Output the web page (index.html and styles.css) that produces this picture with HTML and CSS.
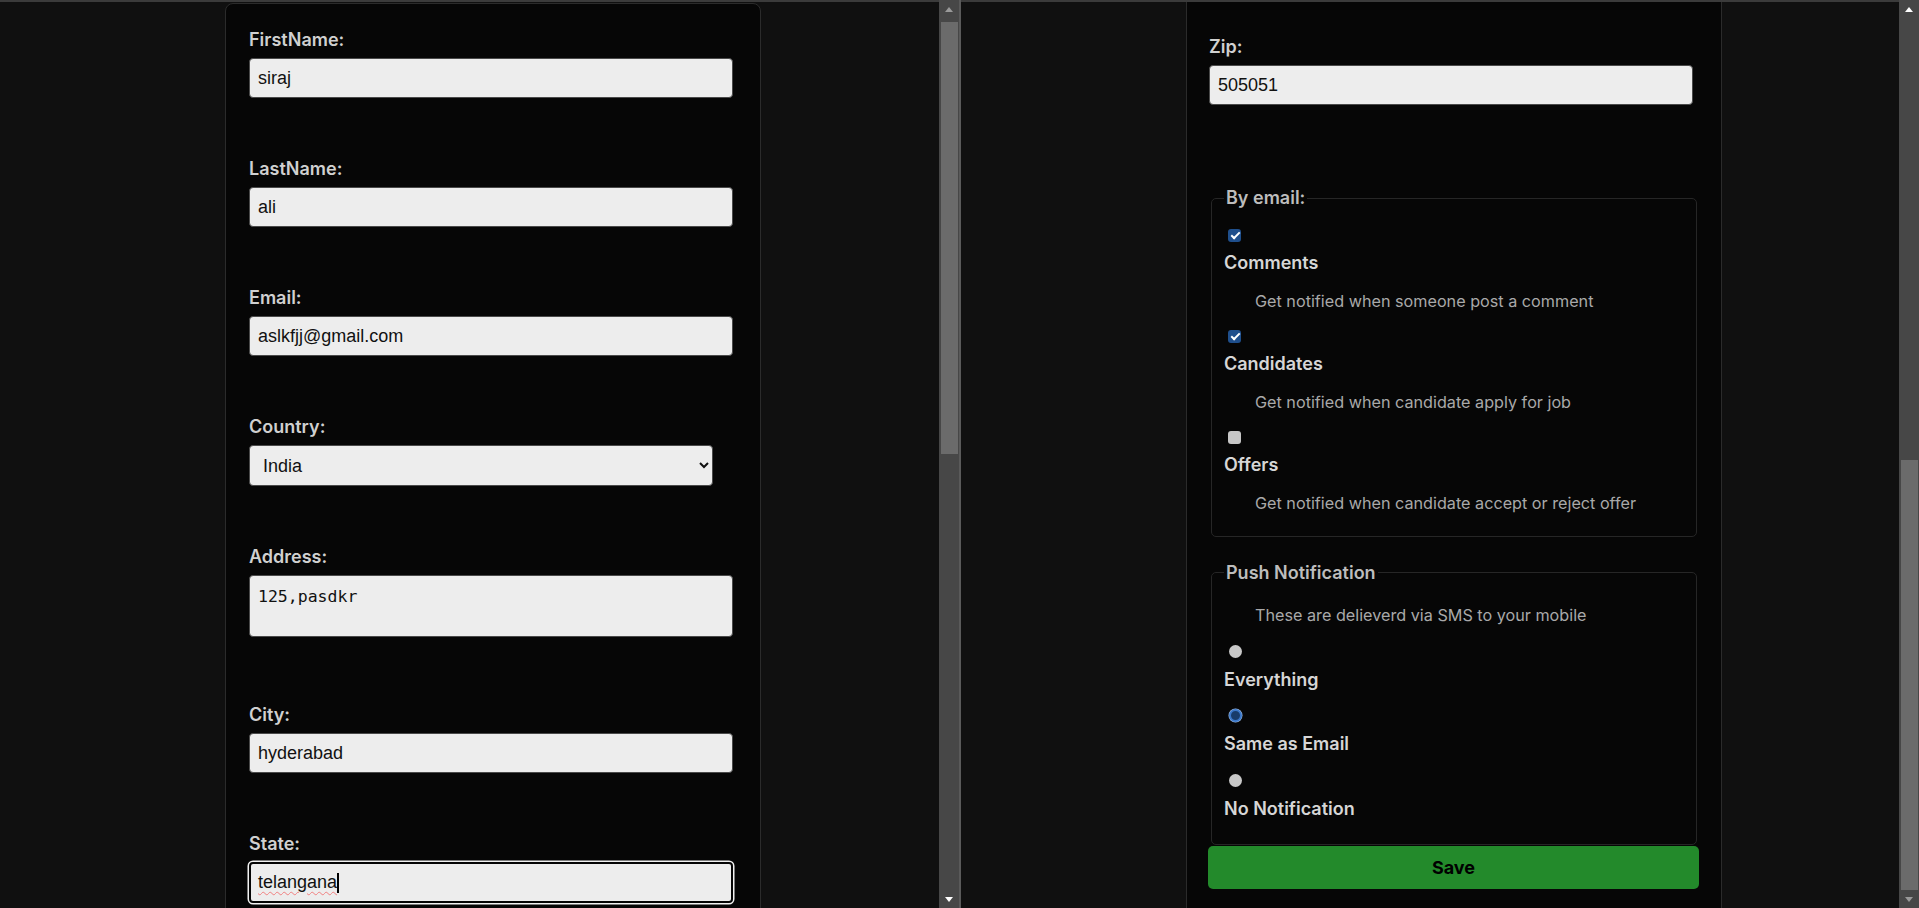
FILE: index.html
```html
<!DOCTYPE html>
<html lang="en">
<head>
<meta charset="utf-8">
<title>Profile form</title>
<link rel="stylesheet" href="styles.css">
</head>
<body>
<div class="split">
  <section class="pane pane-left">
    <div class="viewport">
      <form class="card card-head">
        <div class="field">
          <label class="field-label" for="fn">FirstName:</label>
          <input class="text-input" id="fn" type="text" value="siraj">
        </div>
        <div class="field">
          <label class="field-label" for="ln">LastName:</label>
          <input class="text-input" id="ln" type="text" value="ali">
        </div>
        <div class="field">
          <label class="field-label" for="em">Email:</label>
          <input class="text-input" id="em" type="text" value="aslkfjj@gmail.com">
        </div>
        <div class="field">
          <label class="field-label" for="co">Country:</label>
          <select class="select-input" id="co">
            <option>India</option>
            <option>USA</option>
          </select>
        </div>
        <div class="field field-area">
          <label class="field-label" for="ad">Address:</label>
          <textarea class="area-input" id="ad">125,pasdkr</textarea>
        </div>
        <div class="field">
          <label class="field-label" for="ci">City:</label>
          <input class="text-input" id="ci" type="text" value="hyderabad">
        </div>
        <div class="field">
          <label class="field-label">State:</label>
          <div class="text-input is-focused"><span class="misspelt">telangana</span><span class="caret"></span></div>
        </div>
      </form>
    </div>
    <div class="scrollbar">
      <div class="sb-btn"><span class="tri-up dim"></span></div>
      <div class="track"><div class="thumb thumb-start"></div></div>
      <div class="sb-btn"><span class="tri-down"></span></div>
    </div>
  </section>
  <div class="divider"></div>
  <section class="pane pane-right">
    <div class="viewport">
      <form class="card card-tail">
        <div class="field field-zip">
          <label class="field-label" for="zip">Zip:</label>
          <input class="text-input" id="zip" type="text" value="505051">
        </div>
        <fieldset class="group group-email">
          <legend>By email:</legend>
          <div class="opt">
            <input class="opt-box" type="checkbox" id="c1" checked>
            <label class="opt-title" for="c1">Comments</label>
            <p class="opt-desc">Get notified when someone post a comment</p>
          </div>
          <div class="opt">
            <input class="opt-box" type="checkbox" id="c2" checked>
            <label class="opt-title" for="c2">Candidates</label>
            <p class="opt-desc">Get notified when candidate apply for job</p>
          </div>
          <div class="opt">
            <input class="opt-box" type="checkbox" id="c3">
            <label class="opt-title" for="c3">Offers</label>
            <p class="opt-desc">Get notified when candidate accept or reject offer</p>
          </div>
        </fieldset>
        <fieldset class="group group-push">
          <legend>Push Notification</legend>
          <p class="opt-desc opt-desc-lead">These are delieverd via SMS to your mobile</p>
          <div class="ropt">
            <input class="opt-radio" type="radio" name="push" id="r1">
            <label class="opt-title" for="r1">Everything</label>
          </div>
          <div class="ropt">
            <input class="opt-radio" type="radio" name="push" id="r2" checked>
            <label class="opt-title" for="r2">Same as Email</label>
          </div>
          <div class="ropt">
            <input class="opt-radio" type="radio" name="push" id="r3">
            <label class="opt-title" for="r3">No Notification</label>
          </div>
        </fieldset>
        <button class="save-btn" type="button">Save</button>
      </form>
    </div>
    <div class="scrollbar">
      <div class="sb-btn"><span class="tri-up"></span></div>
      <div class="track"><div class="thumb thumb-end"></div></div>
      <div class="sb-btn"><span class="tri-down dim"></span></div>
    </div>
  </section>
</div>
</body>
</html>
```

FILE: styles.css
```css
* { box-sizing: border-box; }
html, body { margin: 0; height: 100%; }
body {
  background: #111111;
  font-family: Inter, "Noto Sans", sans-serif;
  overflow: hidden;
}
.split { display: flex; height: 908px; }
.pane { display: flex; height: 100%; }
.pane-left { width: 959px; }
.pane-right { width: 958px; }
.divider { width: 2px; background: #5a5a5a; }
.viewport {
  flex: 1;
  overflow: hidden;
  border-top: 2px solid #3b3b3b;
  background: #101010;
}

/* fake scrollbars */
.scrollbar {
  width: 20px;
  background: #474747;
  display: flex;
  flex-direction: column;
}
.sb-btn { height: 18px; display: flex; align-items: center; justify-content: center; }
.tri-up, .tri-down {
  width: 0; height: 0;
  border-left: 4.5px solid transparent;
  border-right: 4.5px solid transparent;
}
.tri-up { border-bottom: 5px solid #ffffff; }
.tri-down { border-top: 5px solid #ffffff; }
.tri-up.dim { border-bottom-color: #9a9a9a; }
.tri-down.dim { border-top-color: #9a9a9a; }
.track { flex: 1; display: flex; flex-direction: column; padding: 0 1px 0 2px; }
.thumb { background: #6b6b6b; }
.thumb-start { margin-top: 4px; height: 432px; }
.thumb-end { margin-top: auto; height: 430px; }

/* card */
.card {
  width: 536px;
  margin-left: 225px;
  background: #060606;
  border: 1px solid #2b2b2b;
  padding: 0 21px 40px 23px;
}
.card-head { margin-top: 1px; border-radius: 8px 8px 0 0; padding-top: 25px; }
.card-tail { border-top: none; border-radius: 0 0 8px 8px; padding-top: 34px; padding-left: 22px; }

.field { margin-bottom: 60px; }
.field-area { margin-bottom: 67px; }
.field-zip { margin-bottom: 0; }
.field-label {
  display: block;
  font-weight: 600;
  font-size: 18px;
  line-height: 22px;
  color: #d0d0d0;
  margin-bottom: 7px;
}
.text-input, .select-input, .area-input {
  display: block;
  border: 1px solid #4a4a4a;
  border-radius: 4px;
  background: #ededed;
  color: #111111;
  font-family: "Liberation Sans", Arial, sans-serif;
  font-size: 18px;
  outline: none;
}
.text-input { width: 484px; height: 40px; padding: 0 8px; }
.select-input { width: 464px; height: 41px; padding: 0 9px; }
.area-input {
  width: 484px;
  height: 62px;
  padding: 10px 8px;
  font-family: "DejaVu Sans Mono", "Liberation Mono", monospace;
  font-size: 16.5px;
  line-height: 22px;
  resize: none;
}
.text-input.is-focused {
  display: flex;
  align-items: center;
  height: 41px;
  border: 2px solid #050505;
  box-shadow: 0 0 0 1.5px #f2f2f2;
  padding: 0 7px;
}
.misspelt {
  text-decoration: underline wavy #f08080;
  text-decoration-thickness: 1px;
  text-underline-offset: 3px;
}
.caret { display: inline-block; width: 2px; height: 20px; background: #000; }

/* fieldsets */
.group {
  margin: 0 0 0 2px;
  width: 486px;
  border: 1px solid #262626;
  border-radius: 5px;
  padding: 0 12px;
}
.group legend {
  padding: 0 2px;
  font-weight: 600;
  font-size: 18px;
  line-height: 22px;
  color: #bdbdbd;
}
.group-email { margin-top: 82px; padding-top: 19.5px; padding-bottom: 23px; }
.group-push { margin-top: 25px; padding-top: 21px; padding-bottom: 24px; }

.opt + .opt { margin-top: 19px; }
.opt-box {
  appearance: none;
  -webkit-appearance: none;
  position: relative;
  display: block;
  width: 13px;
  height: 13px;
  margin: 0 0 0 4px;
  border-radius: 3px;
  background: #c6c6c6;
}
.opt-box:checked { background: #1f4f8c; }
.opt-box:checked::after {
  content: "";
  position: absolute;
  left: 4.5px;
  top: 1.5px;
  width: 3px;
  height: 7px;
  border: solid #ffffff;
  border-width: 0 2px 2px 0;
  transform: rotate(45deg);
}
.opt-title {
  display: block;
  margin-top: 10px;
  font-weight: 600;
  font-size: 18px;
  line-height: 22px;
  color: #d6d6d6;
}
.opt-desc {
  margin: 17px 0 0 31px;
  font-size: 16.2px;
  line-height: 20px;
  color: #a9a9a9;
}
.opt-desc-lead { margin-top: 0; }

.ropt { margin-top: 18.5px; }
.ropt:first-of-type { margin-top: 20px; }
.ropt .opt-title { margin-top: 11px; }
.opt-radio {
  appearance: none;
  -webkit-appearance: none;
  display: block;
  width: 13px;
  height: 13px;
  margin: 0 0 0 5px;
  border-radius: 50%;
  background: #c8c8c8;
}
.opt-radio:checked {
  background: #183c6a;
  border: 2px solid #3b78c9;
  box-shadow: 0 0 0 0.5px #9bb8de;
}

.save-btn {
  display: block;
  width: 491px;
  height: 43px;
  margin: 1px 0 0 -1px;
  background: #238a2b;
  border: none;
  border-radius: 5px;
  font-family: Inter, "Noto Sans", sans-serif;
  font-weight: 700;
  font-size: 18px;
  color: #000000;
}
```
